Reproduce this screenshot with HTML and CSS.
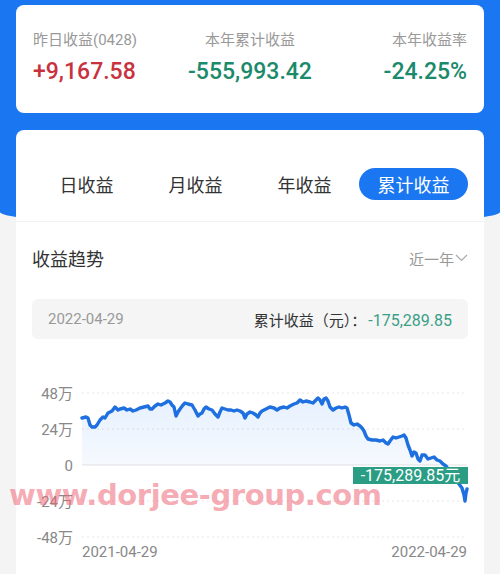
FILE: index.html
```html
<!DOCTYPE html>
<html lang="zh-CN">
<head>
  <meta charset="UTF-8" />
  <title>收益</title>
  <link rel="stylesheet" href="styles.css">
</head>
<body>
  <div class="page">
    <div class="header-bg"></div>

    <!-- Summary -->
    <div class="summary">
      <div class="summary-item left">
        <div class="summary-label">昨日收益(0428)</div>
        <div class="summary-value up">+9,167.58</div>
      </div>
      <div class="summary-item center">
        <div class="summary-label">本年累计收益</div>
        <div class="summary-value down">-555,993.42</div>
      </div>
      <div class="summary-item right">
        <div class="summary-label">本年收益率</div>
        <div class="summary-value down">-24.25%</div>
      </div>
    </div>

    <div class="main">
      <!-- Tabs -->
      <div class="tabs">
        <div class="tab">日收益</div>
        <div class="tab">月收益</div>
        <div class="tab">年收益</div>
        <div class="tab active">累计收益</div>
      </div>

      <!-- Trend -->
      <div class="trend">
        <div class="trend-head">
          <div class="trend-title">收益趋势</div>
          <div class="range">近一年<svg class="chevron" width="13" height="8" viewBox="0 0 13 8"><path d="M1 1l5.5 5.5L12 1" fill="none" stroke="#aaa" stroke-width="1.2"/></svg></div>
        </div>

        <div class="info-bar">
          <span class="info-date">2022-04-29</span>
          <span class="info-total">累计收益（元）：<span class="info-num">-175,289.85</span></span>
        </div>

        <svg class="chart" width="436" height="185" viewBox="32 380 436 185">
          <defs>
            <linearGradient id="area" x1="0" y1="0" x2="0" y2="1">
              <stop offset="0" stop-color="#1b77f1" stop-opacity="0.11"/>
              <stop offset="1" stop-color="#1b77f1" stop-opacity="0.04"/>
            </linearGradient>
          </defs>
          <g class="grid">
            <line x1="82" y1="393" x2="467" y2="393" class="dash"/>
            <line x1="82" y1="429" x2="467" y2="429" class="dash"/>
            <line x1="82" y1="465" x2="467" y2="465" class="zero"/>
            <line x1="82" y1="501" x2="467" y2="501" class="dash"/>
            <line x1="82" y1="537" x2="467" y2="537" class="dash"/>
          </g>
          <g class="axis">
            <text x="73" y="399" text-anchor="end">48万</text>
            <text x="73" y="435" text-anchor="end">24万</text>
            <text x="73" y="471" text-anchor="end">0</text>
            <text x="73" y="507" text-anchor="end">-24万</text>
            <text x="73" y="543" text-anchor="end">-48万</text>
            <text x="82" y="557">2021-04-29</text>
            <text x="467" y="557" text-anchor="end">2022-04-29</text>
          </g>
          <polygon fill="url(#area)" points="82,465 82,418 86,417 88,418 90,425 92,427 95,427 97,425 100,420 103,417 105,418 108,413 112,411 115,407 118,410 120,409 124,408 127,410 130,409 133,411 136,410 140,408 144,407 148,406 150,409 152,409 155,406 158,404 161,405 165,403 168,401 170,402 172,405 174,407 176,416 178,412 180,409 183,405 185,403 188,404 192,405 195,410 198,416 200,414 202,413 204,409 206,407 209,409 212,410 215,414 218,417 220,412 222,408 225,409 228,410 231,410 234,411 237,410 240,411 243,413 245,418 247,414 250,412 253,413 256,415 258,417 260,413 262,411 266,409 270,407 274,408 277,410 280,408 284,407 287,408 290,406 294,404 297,403 300,400 303,402 306,401 310,402 313,403 316,400 318,398 320,400 322,404 324,399 326,398 328,401 330,407 333,410 336,408 339,407 342,408 345,407 347,408 349,415 351,423 354,425 357,424 360,426 362,428 364,431 366,436 368,439 372,440 376,440 380,441 383,440 386,443 388,444 390,441 393,437 396,438 399,437 402,436 404,435 406,438 408,445 410,450 412,456 414,452 416,453 418,459 420,461 422,455 425,455 428,459 431,458 434,457 437,460 440,461 443,464 446,465"/>
          <polyline class="line" points="82,418 86,417 88,418 90,425 92,427 95,427 97,425 100,420 103,417 105,418 108,413 112,411 115,407 118,410 120,409 124,408 127,410 130,409 133,411 136,410 140,408 144,407 148,406 150,409 152,409 155,406 158,404 161,405 165,403 168,401 170,402 172,405 174,407 176,416 178,412 180,409 183,405 185,403 188,404 192,405 195,410 198,416 200,414 202,413 204,409 206,407 209,409 212,410 215,414 218,417 220,412 222,408 225,409 228,410 231,410 234,411 237,410 240,411 243,413 245,418 247,414 250,412 253,413 256,415 258,417 260,413 262,411 266,409 270,407 274,408 277,410 280,408 284,407 287,408 290,406 294,404 297,403 300,400 303,402 306,401 310,402 313,403 316,400 318,398 320,400 322,404 324,399 326,398 328,401 330,407 333,410 336,408 339,407 342,408 345,407 347,408 349,415 351,423 354,425 357,424 360,426 362,428 364,431 366,436 368,439 372,440 376,440 380,441 383,440 386,443 388,444 390,441 393,437 396,438 399,437 402,436 404,435 406,438 408,445 410,450 412,456 414,452 416,453 418,459 420,461 422,455 425,455 428,459 431,458 434,457 437,460 440,461 443,464 446,466 450,472 455,478 459,484 462,488 464,495 465,501 466,493 467,489"/>
          <rect class="tip-bg" x="353" y="467" width="115" height="17"/>
          <text class="tip-text" x="410.5" y="481" text-anchor="middle">-175,289.85元</text>
        </svg>
      </div>
    </div>

    <div class="watermark">www.dorjee-group.com</div>
  </div>
</body>
</html>
```

FILE: styles.css
```css
* {
  box-sizing: border-box;
  margin: 0;
  padding: 0;
}
body {
  font-family: Roboto, "Noto Sans CJK SC", sans-serif;
  background-color: #f4f4f4;
  width: 500px;
  height: 574px;
  overflow: hidden;
}
.page {
  position: relative;
  padding: 5px 16px 0;
}
.header-bg {
  position: absolute;
  left: 0;
  top: 0;
  width: 100%;
  height: 226px;
  background-color: #1b77f1;
  border-radius: 0 0 50% 50% / 0 0 14px 14px;
}

/* Summary card */
.summary {
  position: relative;
  display: grid;
  grid-template-columns: 1fr 1fr 1fr;
  height: 108px;
  padding: 25px 17px 0;
  background-color: #fff;
  border-radius: 8px;
}
.summary-item.center {
  text-align: center;
}
.summary-item.right {
  text-align: right;
}
.summary-label {
  font-size: 15px;
  line-height: 20px;
  color: #999;
  white-space: nowrap;
}
.summary-value {
  margin-top: 7px;
  font-size: 23px;
  line-height: 30px;
  font-weight: 500;
  white-space: nowrap;
}
.summary-value.up {
  color: #c8323f;
}
.summary-value.down {
  color: #1b8a6b;
}

/* Main card */
.main {
  position: relative;
  margin-top: 17px;
  background-color: #fff;
  border-radius: 8px 8px 0 0;
  padding-bottom: 20px;
}
.tabs {
  display: grid;
  grid-template-columns: repeat(4, 1fr);
  padding: 38px 16px 21px;
  border-bottom: 1px solid #f2f2f2;
}
.tab {
  height: 32px;
  line-height: 32px;
  text-align: center;
  font-family: "Noto Sans CJK SC", sans-serif;
  font-size: 18px;
  color: #333;
}
.tab.active {
  background-color: #1b77f1;
  color: #fff;
  border-radius: 16px;
}

.trend {
  padding: 24px 16px 0;
}
.trend-head {
  display: flex;
  justify-content: space-between;
  align-items: center;
  height: 24px;
}
.trend-title {
  font-family: "Noto Sans CJK SC", sans-serif;
  font-size: 18px;
  color: #333;
}
.range {
  display: flex;
  align-items: center;
  font-family: "Noto Sans CJK SC", sans-serif;
  font-size: 15px;
  color: #999;
}
.chevron {
  margin-left: 1px;
}
.info-bar {
  display: flex;
  justify-content: space-between;
  align-items: center;
  height: 40px;
  margin-top: 29px;
  padding: 0 16px;
  background-color: #f5f5f5;
  border-radius: 6px;
  font-size: 15px;
}
.info-date {
  color: #999;
}
.info-total {
  color: #333;
  font-family: "Noto Sans CJK SC", sans-serif;
}
.info-num {
  margin-left: 2px;
  font-family: Roboto, sans-serif;
  font-size: 16px;
  color: #3a9f87;
}

/* Chart */
.chart {
  display: block;
  margin-top: 41px;
  overflow: visible;
}
.grid line {
  stroke-width: 1;
}
.grid .dash {
  stroke: #e6e6e6;
  stroke-dasharray: 2 3;
}
.grid .zero {
  stroke: #e2e2e2;
}
.axis text {
  font-family: Roboto, "Noto Sans CJK SC", sans-serif;
  font-size: 15px;
  fill: #888;
}
.line {
  fill: none;
  stroke: #1e6fe0;
  stroke-width: 3.4;
  stroke-linejoin: round;
  stroke-linecap: round;
}
.tip-bg {
  fill: #2a9d84;
}
.tip-text {
  font-family: Roboto, "Noto Sans CJK SC", sans-serif;
  font-size: 16px;
  fill: #fff;
}

.watermark {
  position: absolute;
  left: 9px;
  top: 481px;
  font-family: "DejaVu Sans", sans-serif;
  font-weight: bold;
  font-size: 29px;
  line-height: 1;
  letter-spacing: -0.4px;
  color: rgba(238, 100, 115, 0.55);
  white-space: nowrap;
}
```
